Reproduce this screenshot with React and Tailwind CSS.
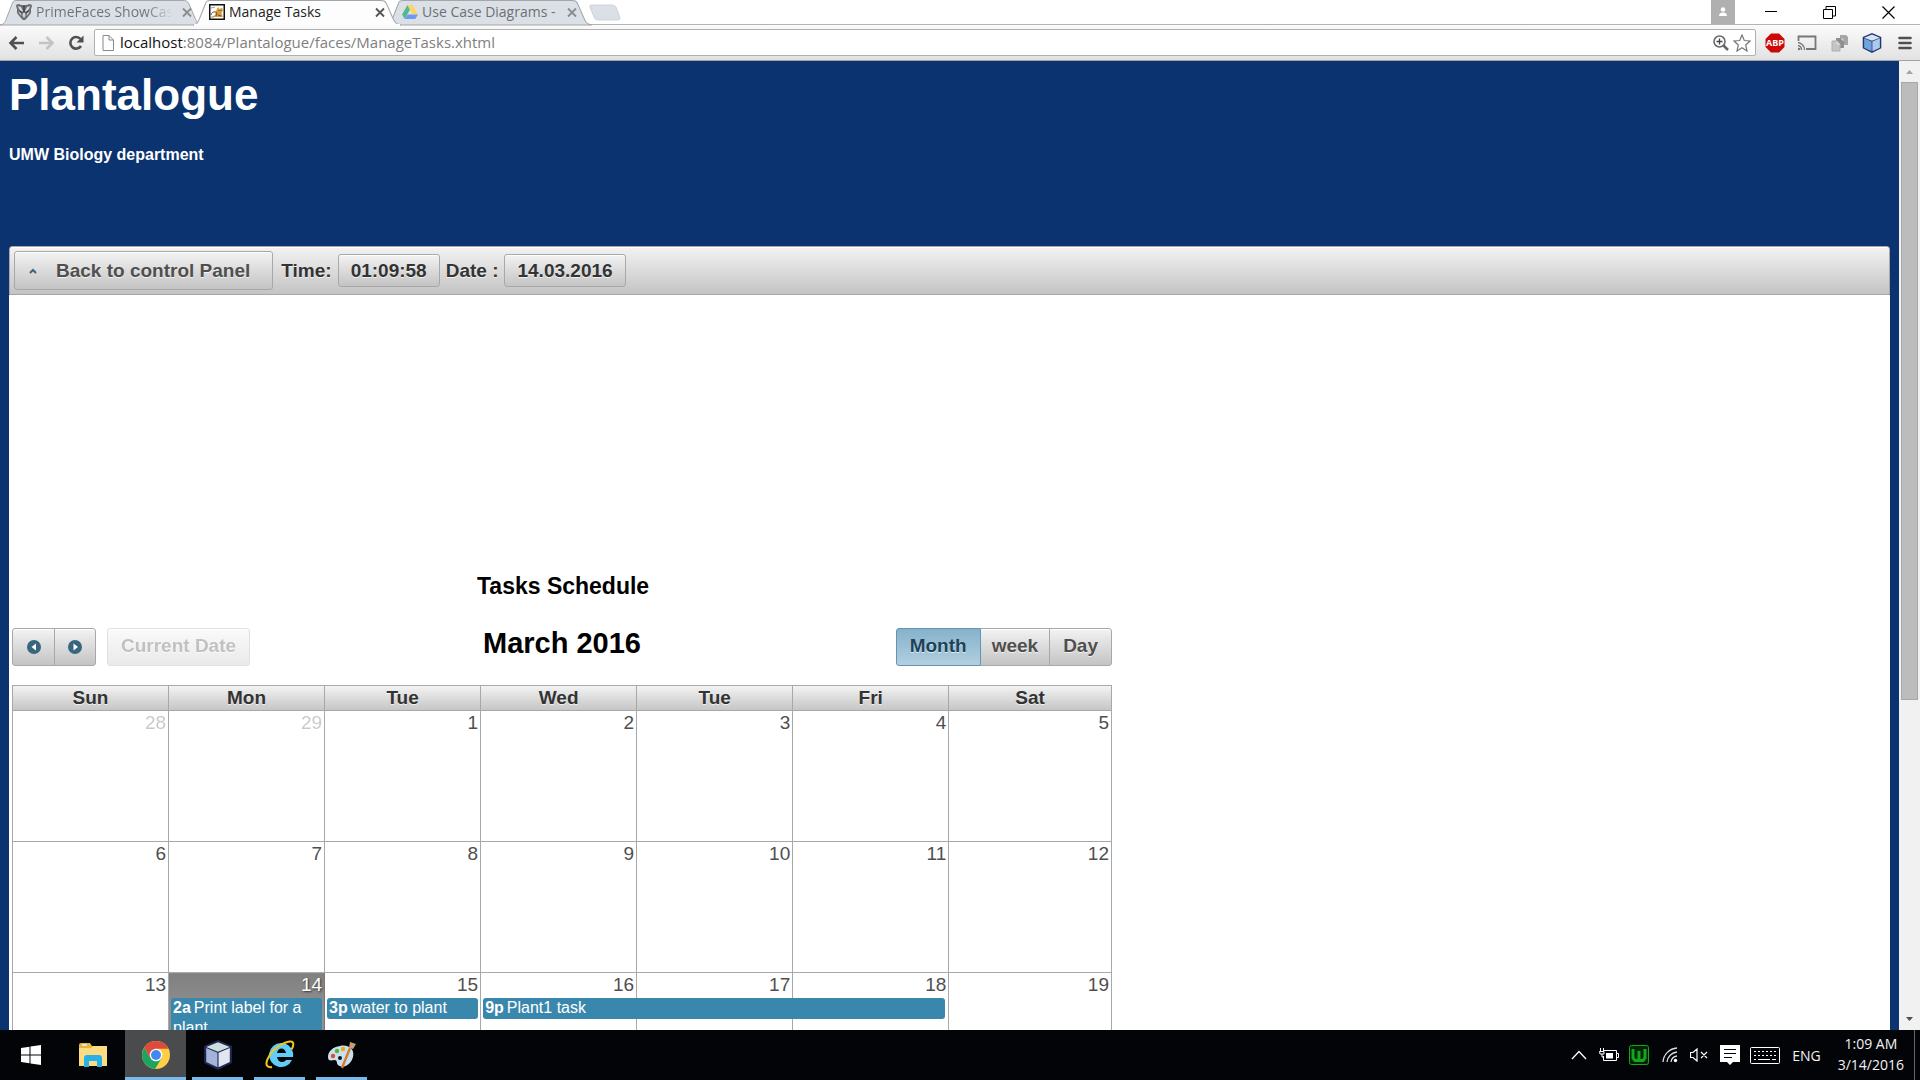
import React from "react";

const ui = "font-['Open_Sans',sans-serif]";

function Tab({ name, title, icon, active, className, inner }) {
  return (
    <div className={"relative flex h-6 shrink-0 items-center " + className}>
      <svg className="absolute inset-0 h-full w-full overflow-visible" viewBox="0 0 203 24" preserveAspectRatio="none" aria-hidden="true">
        <path d="M0 25 C5 24 5 22 7 17 L12 4 C13 1 14 .5 17 .5 H183 C187 .5 187 1 189 4 L195 18 C197 23 198 24 203 25 Z" fill={active ? "#fdfdfd" : "#dbe0e6"} stroke="#a3a6aa" />
        {active && <path d="M1 25 H202" stroke="#fcfcfc" strokeWidth="2" />}
      </svg>
      <div className={"relative flex min-w-0 flex-1 items-center pl-4 " + inner}>
        {icon}
        <span className={"ml-1 min-w-0 flex-1 overflow-hidden whitespace-nowrap text-[14px] leading-6 " + (active ? "text-[#222]" : "text-[#6d7074]")}>{title}</span>
        <button aria-label={"Close " + name} className={"ml-1 h-4 w-3 " + (active ? "text-[#555]" : "text-[#8a8d90]")}>
          <svg viewBox="0 0 12 16" className="h-4 w-3"><path d="M2 4.500 L10 12.500 M10 4.500 L2 12.500" stroke="currentColor" strokeWidth="1.800" /></svg>
        </button>
      </div>
    </div>
  );
}

const PrimeIcon = (
  <svg viewBox="0 0 16 16" className="h-4 w-4 shrink-0">
    <path d="M0 2 Q0 0 3 0 L5 1 H11 L13 0 Q16 0 16 2 L15 5 V9 L12 13 L9 16 H7 L4 13 L1 9 V5 Z" fill="#6a6d71" />
    <path d="M2 2 L5 3 L7 7 L6 8 L3 5 Z M14 2 L11 3 L9 7 L10 8 L13 5 Z M7 9 H9 L9.500 12 L8 14 L6.500 12 Z M2.500 7 L5 9.500 L5.500 12 L3 9 Z M13.500 7 L11 9.500 L10.500 12 L13 9 Z" fill="#d4d7da" />
    <path d="M8 2 V8 M3.500 7 L6 8.500 M12.500 7 L10 8.500" stroke="#2c2c2e" />
  </svg>
);
const CatIcon = (
  <svg viewBox="0 0 16 16" className="h-4 w-4 shrink-0">
    <rect x=".75" y=".75" width="14.500" height="14.500" fill="#fff" stroke="#111" strokeWidth="1.500" />
    <path d="M7 7 L9 3 L10.500 5 L13 3.500 L14 6 L12.500 9 L14 13 H3 L6 11 Z" fill="#d5a03c" />
    <path d="M2 11 Q3 7 7 8 Q9 10 7 12 M10 6 V7 M12 6 V7 M9 11 L12 12" stroke="#6b5328" fill="none" />
    <path d="M2 4 L6 3 M2 13 H5" stroke="#999" />
  </svg>
);
const DriveIcon = (
  <svg viewBox="0 0 16 16" className="h-4 w-4 shrink-0">
    <path d="M5.500 1 L0 10.500 L2.700 15 L8 5.500 Z" fill="#53b98a" />
    <path d="M5.500 1 H10.500 L16 10.500 H10.700 Z" fill="#ffd45f" />
    <path d="M5.500 10.500 H16 L13.300 15 H2.700 Z" fill="#6b9cf3" />
  </svg>
);

function Cube({ className, blue }) {
  return (
    <svg viewBox="0 0 28 28" className={className} aria-hidden="true">
      <path d="M14 0 L27 5.500 V21.500 L14 28 L1 21.500 V5.500 Z" fill={blue ? "#27356f" : "#20264f"} />
      <path d="M14 2 L25 6.500 L14 11 L3 6.500 Z" fill={blue ? "#d3e6f8" : "#cbdfdc"} />
      <path d="M3 7.500 L13.500 12 V25.500 L3 20.500 Z" fill={blue ? "#6fa3dc" : "#a3b3da"} />
      <path d="M25 7.500 L14.500 12 V25.500 L25 20.500 Z" fill={blue ? "#a9cbee" : "#e1e6f1"} />
    </svg>
  );
}

function Browser() {
  return (
    <header className={"shrink-0 " + ui}>
      <div className="flex h-6 items-start justify-between bg-white">
        <div className="flex h-6 min-w-0">
          <Tab name="PrimeFaces ShowCase" title={<span className="bg-gradient-to-r from-[#6d7074] from-80% to-[#dbe0e6] bg-clip-text text-transparent">PrimeFaces ShowCas</span>} icon={PrimeIcon} inner="pr-[10px]" className="w-[203px]" />
          <Tab name="Manage Tasks" title="Manage Tasks" active icon={CatIcon} inner="pr-[15px]" className="z-10 -ml-[10px] w-[208px]" />
          <Tab name="Use Case Diagrams" title="Use Case Diagrams -" icon={DriveIcon} inner="pr-[14px]" className="-ml-[15px] w-[206px]" />
          <button aria-label="New tab" className="-ml-[3px] mt-1 h-[18px] w-8">
            <svg viewBox="0 0 32 18" className="h-[18px] w-8"><path d="M1 3 Q0 1 3 1 H23 Q26 1 27 3 L31 14 Q31 16 29 16 H9 Q6 16 5 13 Z" fill="#dbe0e6" stroke="#cfd3d8" /></svg>
          </button>
        </div>
        <div className="flex h-6 shrink-0">
          <button aria-label="User" className="flex w-6 items-center justify-center bg-[#b0b0b0]">
            <svg viewBox="0 0 10 10" className="h-[10px] w-[10px]"><circle cx="5" cy="2.500" r="2.300" fill="#fff" /><path d="M1 9 Q1 5.500 5 5.500 Q9 5.500 9 9 Z" fill="#fff" /></svg>
          </button>
          <button aria-label="Minimize" className="flex w-[72px] items-center justify-center"><svg viewBox="0 0 12 12" className="h-3 w-3"><path d="M0 5.500 H12" stroke="#000" /></svg></button>
          <button aria-label="Restore" className="flex w-11 items-center justify-center"><svg viewBox="0 0 13 13" className="h-[13px] w-[13px]"><path d="M.5 3.500 H9.500 V12.500 H.5 Z M3 3 V.5 H12.500 V10 H10" stroke="#000" fill="none" /></svg></button>
          <button aria-label="Close" className="ml-[6px] flex w-[63px] items-center justify-center"><svg viewBox="0 0 13 13" className="h-[13px] w-[13px]"><path d="M.5 .5 L12.500 12.500 M12.500 .5 L.5 12.500" stroke="#000" strokeWidth="1.200" /></svg></button>
        </div>
      </div>
      <div className="flex h-[37px] items-center border-b border-t border-b-[#a3a3a3] border-t-[#b4b4b4] bg-gradient-to-b from-[#fbfbfb] to-[#e2e2e2] pl-2 pr-2">
        <button aria-label="Back" className="mr-[13px]"><svg viewBox="0 0 17 16" className="h-4 w-[17px]"><path d="M8.500 2 L2.500 8 L8.500 14 M3 8 H16" stroke="#505050" strokeWidth="2.600" fill="none" /></svg></button>
        <button aria-label="Forward" className="mr-[13px]"><svg viewBox="0 0 17 16" className="h-4 w-[17px]"><path d="M8.500 2 L14.500 8 L8.500 14 M14 8 H1" stroke="#c4c4c4" strokeWidth="2.600" fill="none" /></svg></button>
        <button aria-label="Reload" className="mr-[9px]"><svg viewBox="0 0 17 16" className="h-4 w-[17px]"><path d="M13 11 A5.800 5.800 0 1 1 12.500 4" stroke="#505050" strokeWidth="2.600" fill="none" /><path d="M15.500 .5 V7.500 H8.500 Z" fill="#505050" /></svg></button>
        <div className="flex h-[27px] min-w-0 flex-1 items-center rounded-[2px] border border-[#b0b0b0] bg-white pl-[7px] pr-1">
          <svg viewBox="0 0 12 16" className="mr-[6px] h-4 w-3 shrink-0"><path d="M1 .5 H7 L11.500 5 V15.500 H1 Z M7 .5 V5 H11.500" stroke="#888" fill="none" /></svg>
          <a href="#page" className="min-w-0 flex-1 truncate pb-[2px] text-[15px] leading-6 text-[#808080]"><span className="text-[#111]">localhost</span>:8084/Plantalogue/faces/ManageTasks.xhtml</a>
          <button aria-label="Zoom"><svg viewBox="0 0 16 16" className="h-4 w-4"><circle cx="6.500" cy="6.500" r="5.500" stroke="#666" strokeWidth="1.500" fill="none" /><path d="M3.500 6.500 H9.500 M6.500 3.500 V9.500" stroke="#444" strokeWidth="1.300" /><path d="M10.500 10.500 L15 15" stroke="#666" strokeWidth="2.500" /></svg></button>
          <button aria-label="Bookmark" className="ml-1"><svg viewBox="0 0 18 18" className="h-[18px] w-[18px]"><path d="M9 1 L11.300 6.500 L17 7 L12.700 11 L14 17 L9 13.800 L4 17 L5.300 11 L1 7 L6.700 6.500 Z" fill="#fff" stroke="#777" strokeWidth="1.200" /></svg></button>
        </div>
        <button aria-label="Adblock Plus" className="ml-[9px]"><svg viewBox="0 0 20 20" className="h-5 w-5"><path d="M6 .5 H14 L19.500 6 V14 L14 19.500 H6 L.5 14 V6 Z" fill="#cc0808" /><text x="10" y="13" textAnchor="middle" fontSize="9" fontWeight="700" fill="#fff" fontFamily="Open Sans, sans-serif">ABP</text></svg></button>
        <button aria-label="Cast" className="ml-3"><svg viewBox="0 0 20 16" className="h-4 w-5"><path d="M1.500 6 V1.500 H18.500 V14 H9" stroke="#777" strokeWidth="1.800" fill="none" /><path d="M1 7.500 A7.500 7.500 0 0 1 7.500 15 M1 10.500 A4.500 4.500 0 0 1 4.500 15" stroke="#777" strokeWidth="1.300" fill="none" /><circle cx="2" cy="14" r="1.200" fill="#777" /></svg></button>
        <button aria-label="Documents" className="ml-[14px]"><svg viewBox="0 0 18 18" className="h-[18px] w-[18px]"><path d="M9 1 H15 L17 3 V11 H9 Z" fill="#a5a5a5" /><path d="M5 4 H11 L13 6 V14 H5 Z" fill="#8f8f8f" /><path d="M1 7 H6 L9 10 V17 H1 Z" fill="#c4c4c4" stroke="#b0b0b0" /><path d="M6 7 V10 H9 M11 4 V6 H13" stroke="#e2e2e2" fill="none" /></svg></button>
        <button aria-label="NetBeans" className="ml-[13px]"><Cube blue className="h-5 w-5" /></button>
        <button aria-label="Menu" className="ml-4"><svg viewBox="0 0 14 14" className="h-[14px] w-[14px]"><path d="M1.500 2 H12.500 M1.500 7 H12.500 M1.500 12 H12.500" stroke="#505050" strokeWidth="2.600" strokeLinecap="round" /></svg></button>
      </div>
    </header>
  );
}

const face = "border border-[#a8a8a8] bg-gradient-to-b from-[#f3f3f3] to-[#c4c4c4] shadow-[inset_0_1px_0_#fff] [text-shadow:0_1px_0_rgba(255,255,255,0.7)]";

const days = ["Sun", "Mon", "Tue", "Wed", "Tue", "Fri", "Sat"];
const weeks = [
  [28, 29, 1, 2, 3, 4, 5],
  [6, 7, 8, 9, 10, 11, 12],
  [13, 14, 15, 16, 17, 18, 19],
];
const events = {
  14: { time: "2a", title: "Print label for a plant", size: "w-[calc(100%-4px)]" },
  15: { time: "3p", title: "water to plant", size: "w-[calc(100%-4px)]" },
  16: { time: "9p", title: "Plant1 task", size: "w-[calc(300%-3px)]" },
};

function Arrow({ d }) {
  return (
    <svg viewBox="0 0 16 16" className="h-4 w-4"><circle cx="8" cy="8" r="7" fill="#38667f" /><path d={d} fill="#fff" /></svg>
  );
}

function Schedule() {
  return (
    <section className="w-[1100px] max-w-full">
      <h3 className="pl-[465px] text-[23px] font-bold leading-7 text-black">Tasks Schedule</h3>
      <div className="mt-[27px] grid grid-cols-[1fr_auto_1fr] items-center">
        <div className="flex">
          <button aria-label="Previous month" className={"flex h-[38px] w-[43px] items-center justify-center rounded-l-[3px] " + face}><Arrow d="M10 4.500 V11.500 L5.500 8 Z" /></button>
          <button aria-label="Next month" className={"-ml-px flex h-[38px] w-[42px] items-center justify-center rounded-r-[3px] " + face}><Arrow d="M6.500 4.500 V11.500 L11 8 Z" /></button>
          <button disabled className={"ml-[11px] h-[38px] rounded-[3px] px-[13px] font-bold text-[#4f4f4f] opacity-35 " + face}>Current Date</button>
        </div>
        <h2 className="mb-[7px] text-[29px] font-bold leading-8 text-black">March 2016</h2>
        <div className="flex justify-end font-bold text-[#4f4f4f]">
          <button className="h-[38px] rounded-l-[3px] border border-[#6694b0] bg-gradient-to-b from-[#85b2cb] to-[#b2cfe0] px-[13px] text-[#1c4257] [text-shadow:0_1px_0_rgba(255,255,255,0.7)]">Month</button>
          <button className={"h-[38px] px-[11px] " + face + " border-l-0"}>week</button>
          <button className={"-ml-px h-[38px] rounded-r-[3px] px-[13px] " + face}>Day</button>
        </div>
      </div>
      <table className="mt-[19px] w-full table-fixed border-collapse">
        <colgroup>
          {days.map((d, i) => <col key={i} className={i < 6 ? "w-[14.2%]" : ""} />)}
        </colgroup>
        <thead>
          <tr className="h-[25px] bg-gradient-to-b from-[#f3f3f3] to-[#c4c4c4]">
            {days.map((d, i) => <th key={i} className="border border-[#a8a8a8] p-0 leading-6 text-[#333] [text-shadow:0_1px_0_rgba(255,255,255,0.7)]">{d}</th>)}
          </tr>
        </thead>
        <tbody>
          {weeks.map((w, r) => (
            <tr key={r} className="h-[131px]">
              {w.map((n) => {
                const e = events[n];
                const today = n === 14;
                return (
                  <td key={n} className={"border p-0 align-top " + (today ? "border-[#777] bg-gradient-to-b from-[#808080] to-[#909090] to-30% text-white [text-shadow:1px_1px_2px_#333]" : "border-[#a8a8a8] text-[#4f4f4f]")}>
                    <div className={"pb-px pr-[2px] text-right leading-6 " + (n > 20 ? "opacity-30" : "")}>{n}</div>
                    {e && (
                      <a href={"#task-" + n} className={"relative z-10 ml-[2px] block rounded-[3px] bg-[#3a87ad] px-[2px] pb-px text-[16px] leading-5 text-white [text-shadow:none] " + e.size}>
                        <b className="mr-[3px]">{e.time}</b>{e.title}
                      </a>
                    )}
                  </td>
                );
              })}
            </tr>
          ))}
        </tbody>
      </table>
    </section>
  );
}

function Page() {
  return (
    <div className="flex min-h-0 flex-1">
      <main id="page" className="min-w-0 flex-1 overflow-hidden bg-[#0a3370] px-[9px] font-['Liberation_Sans',sans-serif] text-[19px]">
        <h1 className="pt-2 text-[44px] font-bold leading-[52px] text-white">Plantalogue</h1>
        <p className="mt-6 text-[16px] font-bold leading-5 text-white">UMW Biology department</p>
        <div className={"mt-[81px] flex h-[49px] items-center rounded-t-[3px] px-1 font-bold text-[#333] " + face}>
          <button className={"flex h-[39px] items-center rounded-[3px] pl-[14px] pr-[22px] text-[#4f4f4f] " + face}>
            <svg viewBox="0 0 8 6" className="mr-[19px] h-[6px] w-2"><path d="M1 5 L4 2 L7 5" stroke="#38667f" strokeWidth="2" fill="none" /></svg>
            <span className="pt-px">Back to control Panel</span>
          </button>
          <span className="ml-2 pt-[2px]">Time:</span>
          <output aria-label="Time" className={"ml-[6px] h-[33px] rounded-[3px] px-3 leading-8 " + face}>01:09:58</output>
          <span className="ml-[6px] pt-[2px]">Date :</span>
          <output aria-label="Date" className={"ml-[6px] h-[33px] rounded-[3px] px-3 leading-8 " + face}>14.03.2016</output>
        </div>
        <div className="bg-white pl-[3px] pt-[277px]">
          <Schedule />
        </div>
      </main>
      <div className="flex w-[21px] shrink-0 flex-col items-center bg-[#f1f1f1]" aria-hidden="true">
        <svg viewBox="0 0 21 21" className="h-[21px] w-[21px]"><path d="M7 13 L10.500 9 L14 13 Z" fill="#a3a3a3" /></svg>
        <div className="flex w-full flex-1 justify-center"><div className="h-2/3 w-[17px] border border-[#a8a8a8] bg-[#bcbcbc]" /></div>
        <svg viewBox="0 0 21 21" className="h-[21px] w-[21px]"><path d="M7 8 L10.500 12 L14 8 Z" fill="#505050" /></svg>
      </div>
    </div>
  );
}

function Task({ label, children, running, active, wide }) {
  return (
    <button aria-label={label} className={"flex h-full items-center justify-center " + (wide ? "w-[61px] " : "w-[51px] ") + (active ? "bg-[#4a4b4d] " : "") + (running ? "border-b-[3px] border-[#76b9ed] pt-[3px]" : "")}>
      {children}
    </button>
  );
}

function Taskbar() {
  return (
    <footer className={"flex h-[50px] shrink-0 items-center justify-between bg-[#020408] text-[#f2f2f2] " + ui}>
      <nav className="flex h-full">
        <Task label="Start" wide><svg viewBox="0 0 20 20" className="h-5 w-5"><path d="M0 3 L8.500 1.800 V9.500 H0 Z M9.500 1.600 L20 0 V9.500 H9.500 Z M0 10.500 H8.500 V18.200 L0 17 Z M9.500 10.500 H20 V20 L9.500 18.400 Z" fill="#fff" /></svg></Task>
        <div className="ml-px mr-[2px] h-full"><Task label="File Explorer" wide><svg viewBox="0 0 28 24" className="h-6 w-7"><path d="M0 2 Q0 0 2 0 H11 L13 3 H27 V23 H0 Z" fill="#e9b43a" /><path d="M0 5 H12 L14 3 H28 V23 H0 Z" fill="#fbdc83" /><path d="M3 2 H8" stroke="#d9f2fb" strokeWidth="1.600" /><path d="M5 24 V15 Q5 12 8 12 H20 Q23 12 23 15 V24 H18 V18 H10 V24 Z" fill="#27b0ea" /></svg></Task></div>
        <Task label="Chrome" wide active running>
          <svg viewBox="0 0 28 28" className="h-7 w-7">
            <circle cx="14" cy="14" r="14" fill="#ffce44" />
            <path d="M1.900 7 A14 14 0 0 0 13 28 L19.500 17.200 L14 14 L8.500 17.200 L2.200 6.500 Z" fill="#1da362" />
            <path d="M2.200 6.500 A14 14 0 0 1 26.500 7.700 H14 L8.500 17.200 Z" fill="#dd4b3e" />
            <circle cx="14" cy="14" r="6.300" fill="#fff" /><circle cx="14" cy="14" r="5" fill="#4688f1" />
          </svg>
        </Task>
        <div className="ml-[6px] flex h-full gap-[11px]">
          <Task label="NetBeans" running><Cube className="h-[30px] w-[30px]" /></Task>
          <Task label="Internet Explorer" running>
            <svg viewBox="0 0 30 30" className="h-[30px] w-[30px]">
              <path d="M16 3 A12 12 0 0 1 28 17 H12 Q13 22 17 22 Q20 22 21 20 H27 A12 12 0 1 1 16 3 Z M12 13 H21 Q20 8.500 16.500 8.500 Q13 8.500 12 13 Z" fill="#5fcdf7" fillRule="evenodd" />
              <path d="M7 27 C-4 29 3 13 14 6 C22 1 30 -1 28 6 C27.700 7.500 27 8.500 26.500 9.500" stroke="#f6c71b" strokeWidth="2" fill="none" />
            </svg>
          </Task>
          <Task label="Paint" running>
            <svg viewBox="0 0 30 30" className="h-[30px] w-[30px]"><path d="M13 6 C22 4 28 10 26 17 C24 25 16 29 11 25 C9 23 11 21 8 20 C5 20 1 22 1 17 C1 11 6 7 13 6 Z" fill="#c8dfee" /><circle cx="6" cy="16" r="2.200" fill="#e24a32" /><circle cx="10" cy="11" r="2.200" fill="#54b435" /><circle cx="16" cy="9" r="2.200" fill="#f5a31c" /><circle cx="13" cy="18" r="2" fill="#101418" /><path d="M15 28 L23 8" stroke="#d77a2c" strokeWidth="2.400" /><path d="M22 8 L23 2 L29 4 L26 9 Z" fill="#c99d72" /></svg>
          </Task>
        </div>
      </nav>
      <div className="flex h-full items-center">
        <button aria-label="Show hidden icons"><svg viewBox="0 0 16 10" className="h-[10px] w-4"><path d="M1 9 L8 1.500 L15 9" stroke="#fff" strokeWidth="1.300" fill="none" /></svg></button>
        <svg viewBox="0 0 20 14" className="ml-3 h-[14px] w-5"><path d="M5 2.500 H17.500 V12.500 H4.500 V8 M17.500 5.500 H19.500 V9.500 H17.500" stroke="#fff" fill="none" /><path d="M7 5 H14 V10.500 H7 Z" fill="#fff" /><path d="M1.500 0 V3 M4.500 0 V3 M.5 3.500 H5 V6 H1 Z M3 6 V9 H5" stroke="#fff" fill="none" /></svg>
        <svg viewBox="0 0 20 20" className="ml-[10px] h-5 w-5"><rect x=".5" y=".5" width="19" height="19" rx="2" fill="#04240a" stroke="#18a51c" /><path d="M4 4 V13 L6 15.500 H14 L16 13 V4 M10 6 V15" stroke="#12a818" strokeWidth="3" fill="none" /></svg>
        <svg viewBox="0 0 16 16" className="ml-[13px] h-4 w-4"><path d="M1 15 A15 15 0 0 1 15 1 M5 15 A11 11 0 0 1 15 5 M9 15 A7 7 0 0 1 15 9" stroke="#ddd" strokeWidth="1.300" fill="none" /><circle cx="13.500" cy="13.500" r="1.700" fill="#fff" /></svg>
        <svg viewBox="0 0 18 14" className="ml-3 h-[14px] w-[18px]"><path d="M.5 4.500 H3 L7 1 V13 L3 9.500 H.5 Z M11 4 L17 10 M17 4 L11 10" stroke="#fff" strokeWidth="1.200" fill="none" /></svg>
        <svg viewBox="0 0 20 20" className="ml-3 h-5 w-5"><path d="M0 0 H20 V17 H13 L10 20 L7 17 H0 Z" fill="#fff" /><path d="M4 4.500 H16 M4 8.500 H16 M4 12.500 H12" stroke="#020408" /></svg>
        <svg viewBox="0 0 30 17" className="ml-[10px] h-[17px] w-[30px]"><rect x=".5" y=".5" width="29" height="16" rx="1" stroke="#fff" fill="none" /><path d="M4 4.500 H26 M4 8.500 H26" stroke="#fff" strokeDasharray="2 2" /><path d="M4 12.500 H6 M8 12.500 H20 M22 12.500 H26" stroke="#fff" /></svg>
        <span className="ml-3 text-[14px]">ENG</span>
        <time className="ml-[17px] pb-[2px] text-center text-[14px] leading-[21px]">1:09 AM<br />3/14/2016</time>
        <div className="ml-[10px] mr-[5px] h-full w-px bg-[#66686b]" />
      </div>
    </footer>
  );
}

export default function App() {
  return (
    <div className="flex h-screen flex-col overflow-hidden">
      <Browser />
      <Page />
      <Taskbar />
    </div>
  );
}
